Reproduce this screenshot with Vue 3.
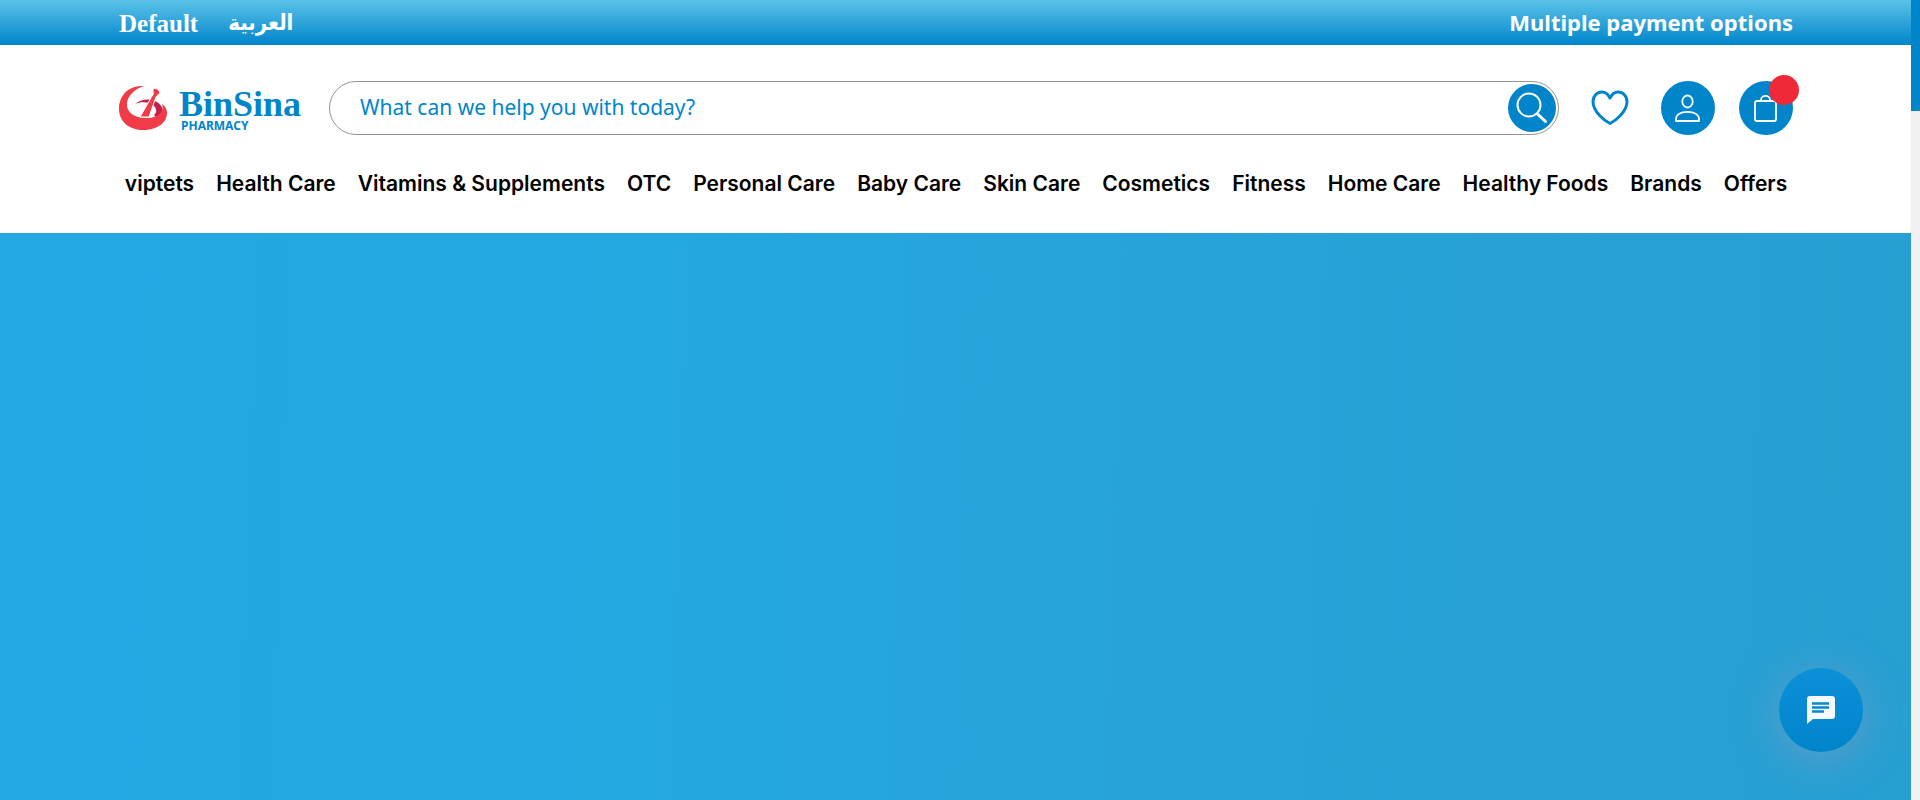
<script setup>
const categories = [
  'viptets', 'Health Care', 'Vitamins & Supplements', 'OTC', 'Personal Care', 'Baby Care',
  'Skin Care', 'Cosmetics', 'Fitness', 'Home Care', 'Healthy Foods', 'Brands', 'Offers'
]
</script>

<template>
  <div class="shell">
    <div class="page">
      <div class="topbar">
        <div class="languages">
          <a href="#" class="lang-default">Default</a>
          <a href="#" class="lang-arabic" lang="ar" dir="rtl">العربية</a>
        </div>
        <a href="#" class="payment">Multiple payment options</a>
      </div>

      <header class="header">
        <div class="main-row">
          <a href="#" class="logo" aria-label="BinSina Pharmacy">
            <svg class="mark" viewBox="0 0 49 46" aria-hidden="true">
              <path d="M16 19 C22 14 31 13 38 17 C45 21 46 30 38 33 L35 30 C40 26 36 20 30 18 C25 16.500 20 17 16 19Z" fill="#c5204b" />
              <path d="M25 1 C10 0 0 10 0 24 C0 37 11 45 24 45 C38 45 48 38 48 28 C48 24 46 21 43 19 C46 27 38 33 28 33 C15 33 7 27 8 18 C9 10 16 4 25 1Z" fill="#f13b48" />
              <path d="M34 6 C33 2 39 3 41 7 C41 9 38 10 37 12 L30 32 L21 32 L33 11 C35 9 34 8 34 6Z" fill="#f13b48" stroke="#fff" stroke-width="1" />
            </svg>
            <span class="wordmark">
              <span class="brand">BinSina</span>
              <span class="sub">PHARMACY</span>
            </span>
          </a>

          <form class="search" @submit.prevent>
            <input type="search" aria-label="Search" placeholder="What can we help you with today?" />
            <button type="submit" class="search-btn" aria-label="Search">
              <svg viewBox="0 0 48 48" fill="none" stroke="#fff" stroke-linecap="round">
                <circle cx="21" cy="21" r="11.500" stroke-width="2" />
                <path d="M29.500 30 L37.500 37.500" stroke-width="3" />
              </svg>
            </button>
          </form>

          <div class="actions">
            <button type="button" class="wish" aria-label="Wishlist">
              <svg viewBox="0 0 38 36" fill="none" stroke="#0085cb" stroke-width="3" stroke-linejoin="round">
                <path d="M19 33.500 C14 31 2 22 2 11.500 C2 6 6 2 11 2 C14.500 2 17 4 19 8 C21 4 23.500 2 27 2 C32 2 36 6 36 11.500 C36 22 24 31 19 33.500Z" />
              </svg>
            </button>
            <button type="button" class="round" aria-label="Account">
              <svg viewBox="0 0 54 54" fill="none" stroke="#fff" stroke-width="1.800" stroke-linejoin="round">
                <ellipse cx="26.500" cy="20.500" rx="5.200" ry="6" />
                <path d="M15 40 V38.500 C15 33.500 20 30.800 26.500 30.800 S38 33.500 38 38.500 V40Z" />
              </svg>
            </button>
            <button type="button" class="round" aria-label="Cart">
              <svg viewBox="0 0 54 54" fill="none" stroke="#fff" stroke-width="1.800" stroke-linejoin="round">
                <rect x="16" y="20" width="21" height="20" rx="2" />
                <path d="M22 20 V19 C22 13.500 31 13.500 31 19 V20" />
              </svg>
              <span class="badge"></span>
            </button>
          </div>
        </div>

        <nav class="nav" aria-label="Categories">
          <a v-for="item in categories" :key="item" href="#">{{ item }}</a>
        </nav>
      </header>

      <main class="hero"></main>
    </div>

    <div class="scrollbar" aria-hidden="true"><div class="thumb"></div></div>

    <button type="button" class="chat" aria-label="Open chat">
      <svg viewBox="0 0 28 28" aria-hidden="true">
        <path d="M3 0 H25 Q28 0 28 3 V20 Q28 23 25 23 H6 L0 28 V3 Q0 0 3 0Z" fill="#f4faff" />
        <path d="M5 7.500 H22 M5 11.500 H22 M5 15.500 H17" stroke="#0787cf" stroke-width="2.600" />
      </svg>
    </button>
  </div>
</template>

<style>
body {
  margin: 0;
}
</style>

<style scoped>
* {
  box-sizing: border-box;
}
a {
  color: inherit;
  text-decoration: none;
}
button {
  border: 0;
  padding: 0;
  cursor: pointer;
}
svg {
  display: block;
}
.shell {
  display: flex;
  min-height: 100vh;
}
.page {
  flex: 1;
  min-width: 0;
  display: flex;
  flex-direction: column;
}
.topbar {
  display: flex;
  align-items: center;
  justify-content: space-between;
  height: 45px;
  padding: 0 118px 0 119px;
  background: linear-gradient(#5bc2e8, #0085cb);
  color: #fff;
}
.languages {
  display: flex;
  align-items: center;
  gap: 30px;
}
.lang-default {
  padding-top: 2px;
  font: 700 25px/28px "Liberation Serif", serif;
}
.lang-arabic {
  font: 700 22px/28px "DejaVu Sans Condensed", "DejaVu Sans", sans-serif;
}
.payment {
  padding-bottom: 2px;
  font: 700 22px/28px "Noto Sans", sans-serif;
}
.header {
  padding: 36px 118px 34px 119px;
  background: #fff;
}
.main-row {
  display: flex;
  align-items: center;
}
.logo {
  display: flex;
  align-items: center;
  gap: 11px;
  width: 210px;
  color: #0085cb;
}
.mark {
  width: 49px;
  height: 46px;
}
.wordmark {
  display: flex;
  flex-direction: column;
  padding-top: 3px;
}
.brand {
  font: 700 36px/32px "Liberation Serif", serif;
}
.sub {
  padding-left: 2px;
  font: 700 12px/12px "Noto Sans", sans-serif;
}
.search {
  flex: 1;
  display: flex;
  align-items: center;
  height: 54px;
  padding: 0 2px 0 30px;
  border: 1px solid #949494;
  border-radius: 27px;
}
.search input {
  flex: 1;
  min-width: 0;
  border: 0;
  padding: 0 0 2px;
  outline: 0;
  background: none;
  color: #0085cb;
  font: 400 21px "Noto Sans", sans-serif;
}
.search input::placeholder {
  color: #0085cb;
  opacity: 1;
}
.search-btn {
  width: 48px;
  height: 48px;
  border-radius: 50%;
  background: #0085cb;
}
.actions {
  display: flex;
  align-items: center;
  gap: 24px;
  padding-left: 24px;
}
.wish {
  display: grid;
  place-items: center;
  width: 54px;
  height: 54px;
  background: none;
}
.wish svg {
  width: 38px;
  height: 36px;
}
.round {
  position: relative;
  width: 54px;
  height: 54px;
  border-radius: 50%;
  background: #0085cb;
}
.badge {
  position: absolute;
  top: -6px;
  right: -6px;
  width: 30px;
  height: 30px;
  border-radius: 50%;
  background: #ef2938;
}
.nav {
  display: flex;
  justify-content: center;
  gap: 22px;
  padding-top: 34px;
  color: #000;
  font: 600 21px/30px Inter, sans-serif;
  white-space: nowrap;
}
.hero {
  flex: 1;
  background: linear-gradient(92deg, #22a9e3, #24a8e0 35%, #27a3d9 60%, #279fd3);
}
.scrollbar {
  width: 9px;
  background: #f0f0f0;
}
.thumb {
  height: 111px;
  background: #0085cb;
}
.chat {
  position: fixed;
  right: 57px;
  bottom: 48px;
  display: grid;
  place-items: center;
  width: 84px;
  height: 84px;
  border-radius: 50%;
  background: linear-gradient(#0c90d8, #0085cb);
  box-shadow: 0 6px 40px rgba(136, 153, 188, 0.6);
}
.chat svg {
  width: 28px;
  height: 28px;
}
</style>
